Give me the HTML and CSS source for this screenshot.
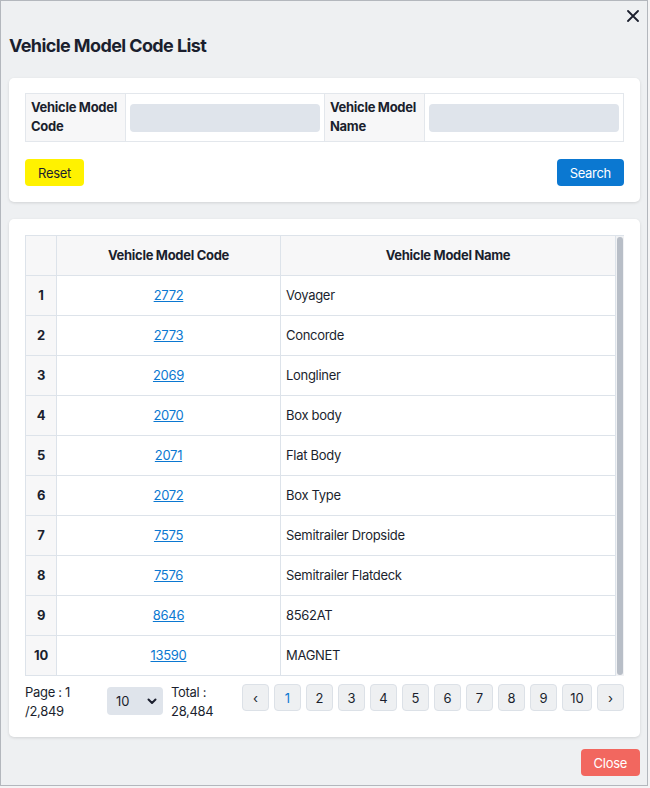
FILE: index.html
```html
<!DOCTYPE html>
<html lang="en">
<head>
<meta charset="utf-8">
<title>Vehicle Model Code List</title>
<link rel="stylesheet" href="styles.css">
</head>
<body>
<div class="dialog">
  <div class="dialog-top">
    <button class="icon-close" aria-label="Close">
      <svg width="12" height="12" viewBox="0 0 12 12"><path d="M1 1 L11 11 M11 1 L1 11" stroke="#1b1f2e" stroke-width="1.8" stroke-linecap="round"/></svg>
    </button>
  </div>
  <h1 class="title">Vehicle Model Code List</h1>

  <section class="card search-card">
    <table class="filter">
      <tr>
        <th>Vehicle Model Code</th>
        <td><input type="text" class="field"></td>
        <th>Vehicle Model Name</th>
        <td><input type="text" class="field"></td>
      </tr>
    </table>
    <div class="actions">
      <button class="btn btn-reset">Reset</button>
      <button class="btn btn-search">Search</button>
    </div>
  </section>

  <section class="card list-card">
    <div class="table-area">
      <div class="table-scroll">
        <table class="grid">
          <colgroup><col class="c-no"><col class="c-code"><col class="c-name"></colgroup>
          <thead>
            <tr><th></th><th>Vehicle Model Code</th><th>Vehicle Model Name</th></tr>
          </thead>
          <tbody>
            <tr><td class="no">1</td><td class="code"><a href="#">2772</a></td><td>Voyager</td></tr>
            <tr><td class="no">2</td><td class="code"><a href="#">2773</a></td><td>Concorde</td></tr>
            <tr><td class="no">3</td><td class="code"><a href="#">2069</a></td><td>Longliner</td></tr>
            <tr><td class="no">4</td><td class="code"><a href="#">2070</a></td><td>Box body</td></tr>
            <tr><td class="no">5</td><td class="code"><a href="#">2071</a></td><td>Flat Body</td></tr>
            <tr><td class="no">6</td><td class="code"><a href="#">2072</a></td><td>Box Type</td></tr>
            <tr><td class="no">7</td><td class="code"><a href="#">7575</a></td><td>Semitrailer Dropside</td></tr>
            <tr><td class="no">8</td><td class="code"><a href="#">7576</a></td><td>Semitrailer Flatdeck</td></tr>
            <tr><td class="no">9</td><td class="code"><a href="#">8646</a></td><td>8562AT</td></tr>
            <tr><td class="no">10</td><td class="code"><a href="#">13590</a></td><td>MAGNET</td></tr>
          </tbody>
        </table>
      </div>
      <div class="scrollbar"><div class="thumb"></div></div>
    </div>
    <div class="pager">
      <div class="page-info">Page : 1 /2,849</div>
      <div class="size-select">
        <select><option>10</option><option>20</option><option>50</option></select>
        <svg class="chev" width="10" height="7" viewBox="0 0 10 7"><path d="M1.5 1.5 L5 5 L8.5 1.5" fill="none" stroke="#1b1f2e" stroke-width="2" stroke-linecap="round" stroke-linejoin="round"/></svg>
      </div>
      <div class="total">Total : 28,484</div>
      <div class="pages">
        <button class="pg">&#8249;</button>
        <button class="pg active">1</button>
        <button class="pg">2</button>
        <button class="pg">3</button>
        <button class="pg">4</button>
        <button class="pg">5</button>
        <button class="pg">6</button>
        <button class="pg">7</button>
        <button class="pg">8</button>
        <button class="pg">9</button>
        <button class="pg wide">10</button>
        <button class="pg">&#8250;</button>
      </div>
    </div>
  </section>

  <div class="footer">
    <button class="btn btn-close">Close</button>
  </div>
</div>
</body>
</html>
```

FILE: styles.css
```css
* { box-sizing: border-box; }
html, body { margin: 0; padding: 0; }
body {
  background: #f4f4f5;
  font-family: Inter, "Noto Sans", "Liberation Sans", sans-serif;
  font-size: 13px;
  letter-spacing: -0.3px;
  color: #1b1f2e;
}
.dialog {
  width: 648px;
  height: 786px;
  background: #eef0f2;
  border: 1px solid #b3b7bd;
  padding: 0 7px 0 8px;
}
.dialog-top {
  height: 27px;
  padding-top: 9px;
  display: flex;
  justify-content: flex-end;
}
.icon-close {
  border: 0;
  background: none;
  padding: 0;
  width: 12px;
  height: 12px;
  margin-right: 1px;
  display: flex;
}
.title {
  margin: 8px 0 0;
  font-size: 18px;
  line-height: 20px;
  font-weight: 700;
  letter-spacing: -0.6px;
}
.card {
  background: #fff;
  border-radius: 5px;
  box-shadow: 0 1px 3px rgba(0,0,0,0.12);
}
.search-card {
  margin-top: 22px;
  padding: 15px 16px 16px;
}
.filter {
  width: 100%;
  border-collapse: collapse;
  table-layout: fixed;
}
.filter th, .filter td {
  border: 1px solid #e3e7ec;
}
.filter th {
  width: 100px;
  background: #f7f7f8;
  text-align: left;
  font-weight: 700;
  line-height: 19px;
  padding: 4px 5px 5px;
}
.filter td {
  padding: 0 4px;
}
.field {
  display: block;
  width: 100%;
  height: 28px;
  border: 0;
  border-radius: 4px;
  background: #dfe4eb;
}
.actions {
  margin-top: 17px;
  display: flex;
  justify-content: space-between;
}
.btn {
  font-family: inherit;
  font-size: 13px;
  letter-spacing: -0.3px;
  height: 27px;
  border: 0;
  border-radius: 4px;
  padding: 0 13px;
}
.btn-reset { background: #fff200; color: #1b1f2e; }
.btn-search { background: #0b78d1; color: #fff; }
.list-card {
  margin-top: 17px;
  padding: 16px 16px 16px;
}
.table-area {
  display: flex;
  height: 441px;
  border-top: 1px solid #dde3ea;
}
.table-scroll {
  flex: 1;
  overflow: hidden;
}
.scrollbar {
  width: 8px;
  background: #f1f2f4;
  padding: 1px;
}
.thumb {
  height: 100%;
  border-radius: 3px;
  background: #b8bec7;
}
.grid {
  width: 100%;
  border-collapse: collapse;
  table-layout: fixed;
}
.c-no { width: 31px; }
.c-code { width: 224px; }
.grid th, .grid td {
  border: 1px solid #dde3ea;
  height: 40px;
  padding: 0 5px;
}
.grid thead th {
  border-top: 0;
  height: 39px;
  background: #f7f7f8;
  font-weight: 700;
  text-align: center;
}
.grid td.no {
  background: #f7f7f8;
  font-weight: 700;
  text-align: center;
}
.grid td.code { text-align: center; }
.grid a { color: #0b78d1; text-decoration: underline; }
.pager {
  margin-top: 7px;
  display: flex;
  align-items: flex-start;
  line-height: 19px;
}
.page-info { flex: 0 0 82px; }
.size-select {
  position: relative;
  margin-top: 4px;
  width: 56px;
  height: 28px;
}
.size-select select {
  appearance: none;
  -webkit-appearance: none;
  width: 100%;
  height: 100%;
  border: 0;
  border-radius: 4px;
  background: #dfe4eb;
  font-family: inherit;
  font-size: 13px;
  color: #1b1f2e;
  padding: 0 0 0 9px;
}
.chev {
  position: absolute;
  right: 6px;
  top: 11px;
  pointer-events: none;
}
.total {
  flex: 0 0 60px;
  margin-left: 8px;
}
.pages {
  margin-left: auto;
  margin-top: 1px;
  display: flex;
  gap: 5px;
}
.pg {
  width: 27px;
  height: 27px;
  padding: 0;
  border: 1px solid #dce1e7;
  border-radius: 4px;
  background: #eef0f2;
  font-family: inherit;
  font-size: 13px;
  color: #1b1f2e;
}
.pg.wide { width: 30px; }
.pg.active { color: #0b78d1; }
.footer {
  margin-top: 12px;
  display: flex;
  justify-content: flex-end;
}
.btn-close {
  background: #f2675f;
  color: #fff;
}
```
